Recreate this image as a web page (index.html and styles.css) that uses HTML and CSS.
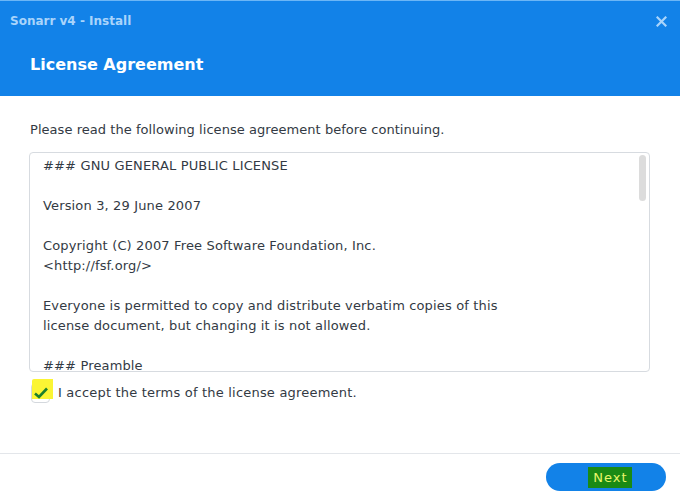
FILE: index.html
```html
<!DOCTYPE html>
<html>
<head>
<meta charset="utf-8">
<link rel="stylesheet" href="styles.css">
</head>
<body>
<div class="window">
  <header class="header">
    <div class="titlebar">
      <span class="title">Sonarr v4 - Install</span>
      <span class="close">
        <svg width="11" height="11" viewBox="0 0 11 11"><path d="M1.5 1.5 L9.5 9.5 M9.5 1.5 L1.5 9.5" stroke="#a9d4fb" stroke-width="2.2" stroke-linecap="square"/></svg>
      </span>
    </div>
    <h1 class="heading">License Agreement</h1>
  </header>
  <main class="content">
    <p class="intro">Please read the following license agreement before continuing.</p>
    <div class="license">
      <div class="license-text">
        <p>### GNU GENERAL PUBLIC LICENSE</p>
        <p>Version 3, 29 June 2007</p>
        <p>Copyright (C) 2007 Free Software Foundation, Inc.<br>&lt;http://fsf.org/&gt;</p>
        <p>Everyone is permitted to copy and distribute verbatim copies of this<br>license document, but changing it is not allowed.</p>
        <p>### Preamble</p>
      </div>
      <div class="scrollbar"><div class="thumb"></div></div>
    </div>
    <label class="accept">
      <span class="checkbox">
        <span class="mark"></span>
        <svg class="check" width="16" height="14" viewBox="0 0 16 14"><path d="M2 7.5 L6 11 L14 2.5" fill="none" stroke="#1d7f2c" stroke-width="2.6"/></svg>
      </span>
      <span class="accept-text">I accept the terms of the license agreement.</span>
    </label>
  </main>
  <footer class="footer">
    <button class="next"><span class="next-label">Next</span></button>
  </footer>
</div>
</body>
</html>
```

FILE: styles.css
```css
* { box-sizing: border-box; }
html, body { margin: 0; padding: 0; background: #ffffff; }
body {
  font-family: "DejaVu Sans", Verdana, sans-serif;
  color: #333a44;
  width: 680px;
  height: 496px;
  overflow: hidden;
}
.window { display: flex; flex-direction: column; height: 496px; }
.header {
  height: 96px;
  background: #1282e8;
  border-top: 1px solid #6cb6f6;
  display: flex;
  flex-direction: column;
}
.titlebar {
  height: 40px;
  display: flex;
  align-items: center;
  justify-content: space-between;
  padding: 0 13px 0 10px;
}
.title {
  font-size: 12px;
  font-weight: bold;
  color: #a9d4fb;
}
.close { display: flex; align-items: center; }
.heading {
  margin: 0;
  padding: 5px 0 0 30px;
  font-size: 16px;
  font-weight: bold;
  color: #ffffff;
  line-height: 38px;
}
.content {
  padding: 26px 30px 0 29px;
  flex: 1;
}
.intro {
  margin: 0 0 0 1px;
  font-size: 13px;
  letter-spacing: 0.05px;
  line-height: 16px;
  color: #333a44;
}
.license {
  margin-top: 14px;
  height: 220px;
  border: 1px solid #d7dbe0;
  border-radius: 4px;
  display: flex;
  overflow: hidden;
}
.license-text {
  flex: 1;
  padding: 3px 0 0 13px;
  font-size: 13px;
  letter-spacing: 0.15px;
  line-height: 20px;
  color: #333a44;
}
.license-text p { margin: 0 0 20px 0; white-space: nowrap; }
.scrollbar { width: 14px; padding: 2px 3px 0 4px; }
.thumb { width: 7px; height: 46px; background: #dcdcdc; border-radius: 4px; }
.accept {
  display: flex;
  align-items: center;
  margin-top: 9px;
  margin-left: 2px;
}
.checkbox {
  position: relative;
  width: 19px;
  height: 20px;
  border: 1px solid #d4d8dd;
  border-radius: 4px;
  background: #ffffff;
  margin-top: 2px;
}
.mark {
  position: absolute;
  left: 0px;
  top: -5px;
  width: 21px;
  height: 20px;
  background: #fbf534;
  border-radius: 2px 0 0 0;
}
.check { position: absolute; left: 1px; top: 2px; }
.accept-text {
  margin-left: 8px;
  margin-top: 1px;
  font-size: 13px;
  letter-spacing: 0.2px;
  color: #333a44;
}
.footer {
  height: 43px;
  border-top: 1px solid #e3e6ea;
  display: flex;
  justify-content: flex-end;
  align-items: flex-start;
  padding: 9px 14px 0 0;
}
.next {
  width: 120px;
  height: 28px;
  border: none;
  border-radius: 14px;
  background: #1282e8;
  display: flex;
  align-items: center;
  justify-content: center;
  padding: 0;
  font-family: "DejaVu Sans", Verdana, sans-serif;
}
.next-label {
  margin-left: 8px;
  background: #1a8a14;
  color: #e8f56a;
  font-size: 13px;
  letter-spacing: 1px;
  line-height: 21px;
  padding: 0 4px 0 5px;
}
```
